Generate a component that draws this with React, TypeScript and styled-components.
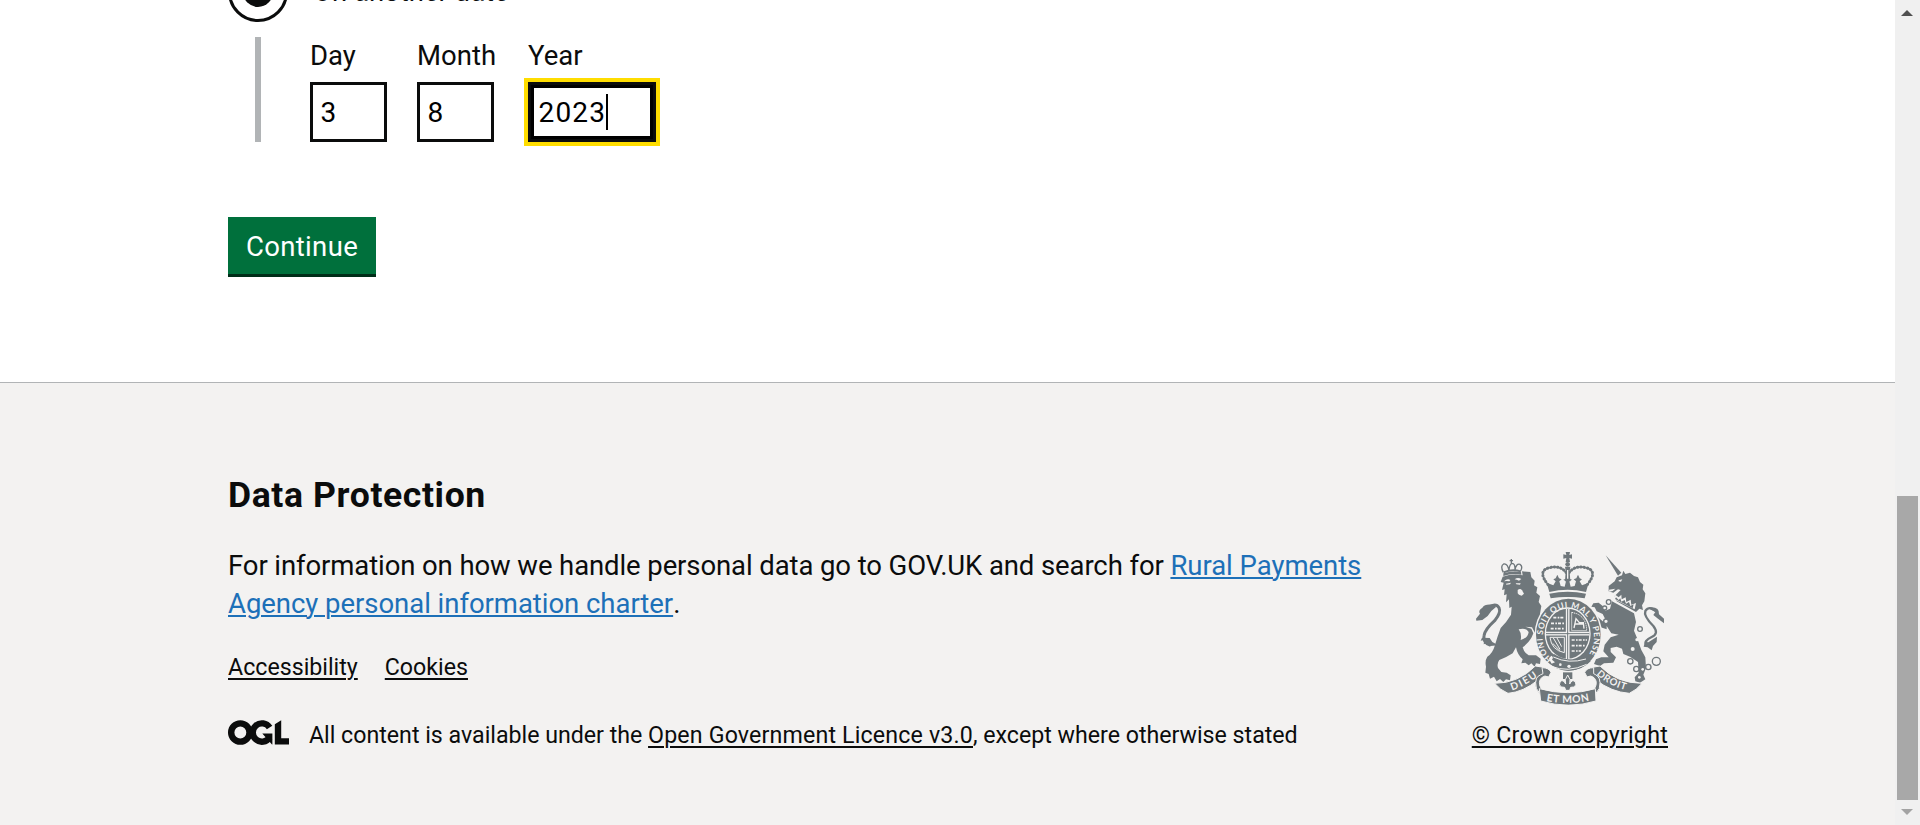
import React from "react";
import styled, { createGlobalStyle } from "styled-components";

const ink = "#0b0c0c";
const paper = "#f3f2f1";
const rule = "#b1b4b6";
const crestGrey = "#6f777b";

const GlobalStyle = createGlobalStyle`
  *, *::before, *::after { box-sizing: border-box; }
  html, body { margin: 0; height: 100%; overflow: hidden; }
  body {
    background: #fff;
    color: ${ink};
    font-family: Roboto, "Liberation Sans", Arial, sans-serif;
    font-size: 27.5px;
  }
`;

const Viewport = styled.div`
  display: flex;
  width: 100%;
  height: 825px;
  overflow: hidden;
`;

const Page = styled.div`
  display: flex;
  flex-direction: column;
  flex: 1;
  min-width: 0;
`;

const Main = styled.main`
  height: 382px;
  padding-left: 228px;
`;

const RadioItem = styled.div`
  display: flex;
  align-items: center;
  gap: 25px;
  height: 60px;
  margin-top: -38px;
`;

const RadioControl = styled.span`
  display: grid;
  place-items: center;
  width: 60px;
  height: 60px;
  border: 3px solid ${ink};
  border-radius: 50%;

  &::after {
    content: "";
    width: 30px;
    height: 30px;
    border-radius: 50%;
    background: ${ink};
  }
`;

const RadioLabel = styled.span`
  line-height: 38px;
`;

const Conditional = styled.div`
  display: flex;
  gap: 30px;
  height: 105px;
  margin: 15px 0 75px 27px;
  padding-left: 49px;
  border-left: 6px solid ${rule};
`;

const DateField = styled.div<{ $width: number }>`
  display: flex;
  flex-direction: column;
  gap: 8px;
  width: ${(p) => p.$width}px;
`;

const FieldLabel = styled.label`
  line-height: 37px;
  white-space: nowrap;
`;

const FieldBox = styled.div<{ $width: number; $focused?: boolean }>`
  display: flex;
  align-items: center;
  width: ${(p) => p.$width}px;
  height: 60px;
  padding: 0 7.5px;
  border: 3px solid ${ink};
  background: #fff;
  color: #000;
  font-size: 28px;
  letter-spacing: 1.2px;
  ${(p) =>
    p.$focused &&
    `
    outline: 4px solid #fd0;
    box-shadow: inset 0 0 0 3px #000;
  `}
`;

const Caret = styled.span`
  width: 2px;
  height: 36px;
  background: #000;
`;

const ContinueButton = styled.button`
  display: block;
  width: 148px;
  height: 60px;
  padding: 1px 0 0;
  border: 0;
  border-bottom: 3px solid #002d18;
  background: #00703c;
  color: #fff;
  font: inherit;
  letter-spacing: 0.35px;
`;

const Footer = styled.footer`
  display: flex;
  justify-content: space-between;
  align-items: flex-end;
  height: 443px;
  padding: 0 227px 75px 228px;
  border-top: 1px solid ${rule};
  background: ${paper};
`;

const FooterText = styled.div`
  width: 1160px;
`;

const FooterHeading = styled.h2`
  margin: 0 0 29px;
  font-size: 35.6px;
  line-height: 45px;
  letter-spacing: 0.6px;
`;

const FooterParagraph = styled.p`
  margin: 0 0 29px;
  line-height: 38px;
  letter-spacing: -0.1px;
`;

const BodyLink = styled.a`
  color: #1d70b8;
  letter-spacing: -0.04px;
  text-decoration: underline 2px;
  text-underline-offset: 2px;
`;

const MetaLinks = styled.nav`
  display: flex;
  gap: 27px;
  margin-bottom: 38px;
  font-size: 23.2px;
  line-height: 30px;
`;

const MetaLink = styled.a`
  color: ${ink};
  text-decoration: underline 2px;
  text-underline-offset: 3px;
`;

const LicenceRow = styled.div`
  display: flex;
  align-items: flex-start;
  gap: 20px;
  font-size: 23.2px;
  line-height: 30px;
  letter-spacing: -0.01px;

  ${MetaLink} {
    letter-spacing: 0.16px;
  }
`;

const Copyright = styled.div`
  display: flex;
  flex-direction: column;
  align-items: center;
  gap: 15px;
  font-size: 23.2px;
  line-height: 30px;
  letter-spacing: 0.25px;
`;

const ScrollTrack = styled.div`
  display: flex;
  flex-direction: column;
  align-items: center;
  width: 25px;
  height: 825px;
  padding: 10px 3px 10px 2px;
  background: #f0f0f0;
`;

const ScrollArrow = styled.span<{ $down?: boolean }>`
  width: 12px;
  height: 6px;
  background: ${(p) => (p.$down ? "#a3a3a3" : "#505050")};
  clip-path: ${(p) =>
    p.$down ? "polygon(0 0, 100% 0, 50% 100%)" : "polygon(50% 0, 100% 100%, 0 100%)"};
`;

const ScrollThumb = styled.div`
  width: 21px;
  height: 304px;
  margin: auto 0 9px;
  background: #a8a8a8;
`;

function OglLogo() {
  return (
    <svg width="61" height="25" viewBox="0 0 483.2 195.7" fill="none" stroke={ink} strokeWidth="50.7">
      <circle cx="97.8" cy="97.8" r="72.5" />
      <path d="M329.5 58.9A72.5 72.5 0 1 0 329.5 137" />
      <path d="M271.5 105.5h80v87.8h-3l-76.8-87.8z" fill={ink} stroke="none" />
      <path d="M421.5 .1V142.8h61.7v50.7H370.8V32.4z" fill={ink} stroke="none" />
    </svg>
  );
}

function Crest() {
  return (
    <svg width="188" height="153" viewBox="48 36 564 459" fill={crestGrey} preserveAspectRatio="none">
      <defs>
        <path id="garter" d="M276 359A77 88 0 1 1 374 359" />
        <path id="dieu" d="M156 451Q197 438 238 406" />
        <path id="etmon" d="M259 483Q323 496 391 481" />
        <path id="droit" d="M409 403Q445 438 504 452" />
      </defs>

      {/* Lion: crown */}
      <g fill="none" stroke={crestGrey} strokeWidth="4">
        <path d="M130 97Q120 78 131 72Q143 70 147 92Q148 72 156 70Q166 70 165 90Q168 70 180 73Q190 80 181 94" />
        <path d="M131 97Q156 86 182 94" strokeWidth="6" />
        <path d="M154 57v12M149 62h10" />
      </g>
      <path d="M130 100q26-9 53-4l1 8q-28-5-54 4z" />
      {/* Lion: mane, body and legs */}
      <path d="M128 110L122 126 131 128 126 150 134 148 132 166 140 163 138 187 147 178 148 204 155 200 153 224Q140 246 122 264 112 290 104 318 98 340 82 350 74 362 78 380L76 398 86 402 90 416 102 410 110 424 120 417 130 426 138 418 150 421 152 406 140 398 124 396 114 384Q110 370 118 360 140 352 158 340L168 322Q172 344 188 358L184 370 196 368 206 376 214 370 224 380 228 370 240 372 242 356 228 346 206 346Q192 338 188 322 208 306 215 292L220 280 214 266 196 260 216 262 232 292 230 306 246 312 262 290 252 262 256 240 240 222 244 198 236 186 240 168 229 158 232 142 222 136 224 122 214 112 211 96 186 94 188 106Q158 100 128 110Z" />
      <path d="M176 268q22-6 30 8-2 18-24 24 4-18-6-32z" fill={paper} />
      <g fill={paper}>
        <path d="M132 124q10-10 19-4l-3 4q-8-2-16 0z" />
        <path d="M164 118q9-8 20-1l-7 5q-7-3-13-4z" />
        <path d="M138 131l15-3-3 5-11 1z" />
        <path d="M167 130h15l-2 4-11-1z" />
        <path d="M173 150q8-6 13 1l6 10-7 6q-10-1-12-7z" />
      </g>
      {/* Lion: tail */}
      <path
        d="M92 316Q68 308 72 287Q75 268 104 242Q124 218 117 203Q108 188 84 202"
        fill="none" stroke={crestGrey} strokeWidth="9"
      />
      <path d="M102 195q-27-5-35 8-14 9-7 18l-12 15 1 6 18-2 16-12 11-15 14-12z" />
      <path d="M66 293l-4 9 11-2-2 13 13-5 7 10 24-2-18-10-8-12z" />

      {/* Unicorn: horn, head and mane */}
      <path d="M437 46L484 98 474 107Z" />
      <path d="M470 112L486 106 490 92 496 102 510 98 522 108 534 112 540 126 550 134 548 148 556 160 553 184 546 196 549 210 538 206 528 216 470 184 464 168 482 150 474 148 460 158 446 154 446 138 464 124Z" />
      <path d="M447 149l19-3-8 7-10 2zM476 121l11-3-4 7-7-1z" fill={paper} />
      <path d="M466 164l10 8 8-8 1 14 12-6 2 14 13-7 2 15 14-5-4 19-62-30z" fill={paper} />
      <path d="M468 172l8 8 5-5 3 10 10-5 4 11 9-5 4 12 10-5-3 12-53-28z" />
      {/* Unicorn: body and legs */}
      <path d="M456 184L522 220 528 246 522 272 532 296 544 330 556 352 558 384 550 404 556 418 540 428 526 424 524 412 536 398 534 366 510 350 490 342 486 326 470 320 452 324 452 336 468 352 460 368 432 370 420 378 402 372 408 358 424 352 446 352 430 334 434 314 452 292 476 284 454 280 440 258 440 268 422 262 416 246 400 238 410 228 428 244 440 246 428 222 410 214 404 202 394 200 400 190 416 188 428 198 436 212 450 206Z" />
      <g fill={paper} stroke={crestGrey} strokeWidth="4">
        <circle cx="446" cy="186" r="7" />
        <circle cx="434" cy="204" r="6" />
        <circle cx="438" cy="244" r="7" />
        <circle cx="511" cy="364" r="8" />
        <circle cx="529" cy="387" r="8" />
        <circle cx="565" cy="381" r="8" />
        <circle cx="589" cy="364" r="12" />
        <circle cx="540" cy="267" r="7" />
      </g>
      <g fill={paper}>
        <circle cx="531" cy="299" r="5" />
        <circle cx="518" cy="327" r="6" />
        <circle cx="548" cy="388" r="4" />
        <circle cx="538" cy="412" r="4" />
      </g>
      {/* Unicorn: tail */}
      <path
        d="M559 315Q550 303 575 291Q598 281 580 258Q550 228 556 213Q568 196 587 213"
        fill="none" stroke={crestGrey} strokeWidth="7"
      />
      <path d="M568 202q31-3 29 21l15 13v14l-18-14-14-11 6-9-16-8z" />
      <path d="M591 290l-1 16-11 12-4 13-12-9-12-2 4-15 10 2z" />

      {/* Royal crown */}
      <path d="M317 36h13l-2 9 8-2v13l-8-2 2 12h-13l2-12-9 2V43l9 2z" />
      <circle cx="323" cy="73" r="7" />
      <g fill="none" stroke={crestGrey} strokeLinecap="round">
        <path d="M264 134Q232 94 265 84Q300 74 318 97M382 134Q414 94 381 84Q346 74 328 97" strokeWidth="9" strokeDasharray="1 9" />
        <path d="M264 134Q232 94 265 84Q300 74 318 97M382 134Q414 94 381 84Q346 74 328 97" strokeWidth="4" />
      </g>
      <path d="M315 80h16l-2 14 2 30h-16l2-30z" />
      <path d="M260 128L280 136 287 124 280 118 287 115 292 104 297 115 305 118 298 124 302 138 314 140 318 124 310 119 318 116 323 106 328 116 336 119 328 124 332 140 344 138 348 124 341 118 349 115 354 104 359 115 366 118 359 124 366 136 386 128 378 156Q323 142 268 156Z" />
      <path d="M268 161q55-12 110 0l-4 14q-52-8-102 0z" />
      <path d="M321 90h4v26h-4z" fill={paper} />

      {/* Garter and quartered shield */}
      <ellipse cx="325" cy="283" rx="101" ry="112" fill={paper} />
      <ellipse cx="325" cy="284" rx="97" ry="108" />
      <ellipse cx="323" cy="281" rx="69" ry="79" fill={paper} />
      <ellipse cx="323" cy="281" rx="65" ry="75" />
      <g stroke={paper} fill="none">
        <path d="M323 207v150M258 281h130" strokeWidth="11" />
        <path d="M280 233h34M273 250h40M272 266h41" strokeWidth="5" strokeDasharray="9 4 5 3" />
        <path d="M335 300h46M335 317h40M335 333h28" strokeWidth="5" strokeDasharray="9 4 5 3" />
        <path d="M335 217v55h45q0-38-30-51z" strokeWidth="3" strokeDasharray="4 2" />
        <path d="M342 264l6-28 10 12 12 0 2 18M345 252h24" strokeWidth="4" />
        <path d="M270 292q4 38 43 46v-46z" strokeWidth="3" />
        <path d="M280 294l20 34M291 294l14 26M278 310l22 22" strokeWidth="3" />
      </g>
      <path d="M323 207v150M258 281h130" stroke={crestGrey} strokeWidth="3" />
      <path d="M262 362L282 342Q325 370 378 352L392 364Q366 392 325 392 288 390 262 362Z" />
      <path d="M280 351q46 22 98 6M272 378q51 22 108-5" fill="none" stroke={paper} strokeWidth="3" />
      <g fill={paper}>
        <circle cx="301" cy="374" r="4" />
        <circle cx="327" cy="379" r="5" />
        <path d="M274 347q8 4 2 12l9 8-10 4q-6-8-8-16z" />
      </g>

      {/* Motto ribbon and badge */}
      <path d="M309 397h28v20h-28z" />
      <path d="M323 405q11 14 6 27 8-16 17-6 6 10-5 15l-9 1-3 9h-12l-3-9-9-1q-11-5-5-15 9-10 17 6-5-13 6-27z" stroke={paper} strokeWidth="3" />
      <g stroke={paper} strokeWidth="3">
        <path d="M104 430Q175 430 226 378L258 383 262 402Q240 404 234 420 190 456 144 460 120 450 104 430Z" />
        <path d="M246 383q21 0 27 14l-7 14q-12-7-21 2-12 12-3 30l11 12-13 6q-15-14-13-33 1-14 6-18 8-6 16-9z" />
        <path d="M546 430Q470 430 420 378L391 383 387 402Q400 404 408 420 454 456 508 460 530 450 546 430Z" />
        <path d="M401 383q-21 0-27 14l7 14q12-7 21 2 12 12 3 30l-11 12 13 6q15-14 13-33-1-14-6-18-6-6-13-9z" />
        <path d="M238 446Q325 470 406 446L408 483Q325 508 242 483Z" />
      </g>

      <g fill={paper} fontFamily="Lato, 'Liberation Sans', sans-serif" fontWeight="700">
        <text fontSize="25"><textPath href="#garter" textLength="388">HONI SOIT QUI MAL Y PENSE</textPath></text>
        <text fontSize="30"><textPath href="#dieu" textLength="88">DIEU</textPath></text>
        <text fontSize="31"><textPath href="#etmon" textLength="130">ET MON</textPath></text>
        <text fontSize="29"><textPath href="#droit" textLength="100">DROIT</textPath></text>
      </g>
    </svg>
  );
}

export default function App() {
  return (
    <Viewport>
      <GlobalStyle />
      <Page>
        <Main>
          <RadioItem>
            <RadioControl />
            <RadioLabel>On another date</RadioLabel>
          </RadioItem>
          <Conditional>
            <DateField $width={77}>
              <FieldLabel>Day</FieldLabel>
              <FieldBox $width={77}>3</FieldBox>
            </DateField>
            <DateField $width={81}>
              <FieldLabel>Month</FieldLabel>
              <FieldBox $width={77}>8</FieldBox>
            </DateField>
            <DateField $width={128}>
              <FieldLabel>Year</FieldLabel>
              <FieldBox $width={128} $focused>
                2023
                <Caret />
              </FieldBox>
            </DateField>
          </Conditional>
          <ContinueButton type="button">Continue</ContinueButton>
        </Main>
        <Footer>
          <FooterText>
            <FooterHeading>Data Protection</FooterHeading>
            <FooterParagraph>
              For information on how we handle personal data go to GOV.UK and search for{" "}
              <BodyLink>Rural Payments Agency personal information charter</BodyLink>.
            </FooterParagraph>
            <MetaLinks>
              <MetaLink>Accessibility</MetaLink>
              <MetaLink>Cookies</MetaLink>
            </MetaLinks>
            <LicenceRow>
              <OglLogo />
              <span>
                All content is available under the <MetaLink>Open Government Licence v3.0</MetaLink>, except where
                otherwise stated
              </span>
            </LicenceRow>
          </FooterText>
          <Copyright>
            <Crest />
            <MetaLink>© Crown copyright</MetaLink>
          </Copyright>
        </Footer>
      </Page>
      <ScrollTrack>
        <ScrollArrow />
        <ScrollThumb />
        <ScrollArrow $down />
      </ScrollTrack>
    </Viewport>
  );
}
